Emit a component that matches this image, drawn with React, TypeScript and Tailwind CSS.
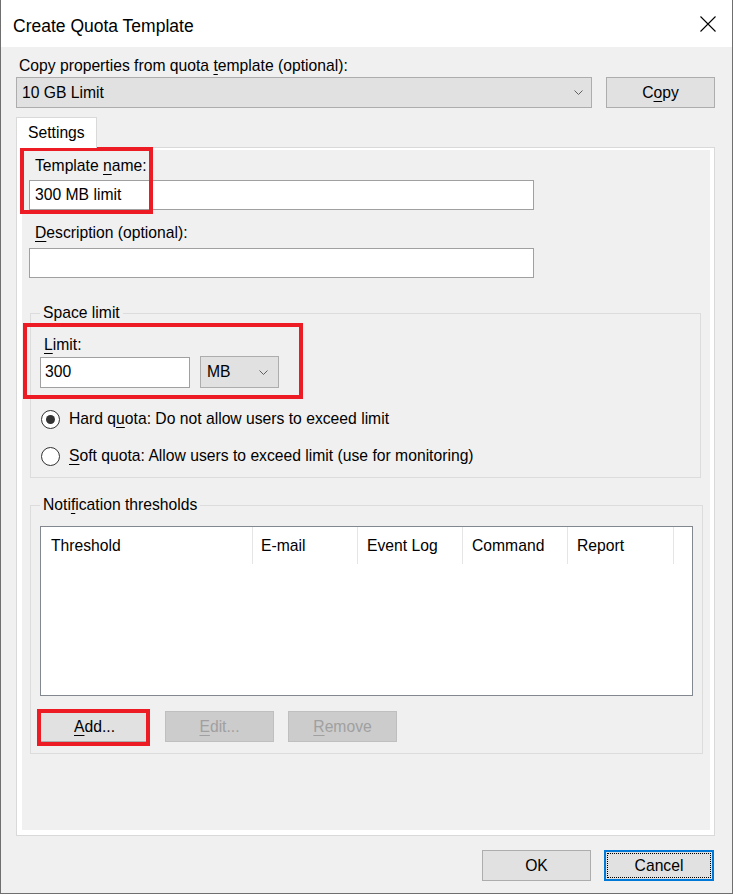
import React from 'react';

const U = ({ children }: { children: React.ReactNode }) => (
  <span className="underline decoration-1 underline-offset-[3px]">{children}</span>
);

const Chevron = () => (
  <svg width="9" height="5" viewBox="0 0 9 5" fill="none">
    <path d="M0.5 0.5L4.5 4.5L8.5 0.5" stroke="#606060" strokeWidth="1" />
  </svg>
);

interface WinButtonProps {
  children: React.ReactNode;
  disabled?: boolean;
  className?: string;
}

const WinButton: React.FC<WinButtonProps> = ({ children, disabled, className = '' }) => (
  <div
    className={`flex h-[31px] w-[109px] items-center justify-center border ${
      disabled ? 'border-[#bfbfbf] bg-[#cccccc] text-[#a0a0a0]' : 'border-[#adadad] bg-[#e1e1e1] text-black'
    } ${className}`}
  >
    {children}
  </div>
);

const Radio = ({ checked, children }: { checked?: boolean; children: React.ReactNode }) => (
  <div className="flex h-[24px] items-center">
    <div className="ml-[1px] flex h-[19px] w-[19px] items-center justify-center rounded-full border border-[#333333] bg-white">
      {checked && <div className="h-[9px] w-[9px] rounded-full bg-[#333333]" />}
    </div>
    <span className="ml-[9px]">{children}</span>
  </div>
);

const columns = [
  { label: 'Threshold', cls: 'w-[212px] pl-[10px]' },
  { label: 'E-mail', cls: 'w-[105px] pl-[8px]' },
  { label: 'Event Log', cls: 'w-[105px] pl-[9px]' },
  { label: 'Command', cls: 'w-[105px] pl-[9px]' },
  { label: 'Report', cls: 'w-[106px] pl-[9px]' },
];

export default function App() {
  return (
    <div className="relative flex h-[894px] w-[733px] flex-col border-x border-b border-[#6f6f6f] bg-[#f0f0f0] font-['Liberation_Sans',Arial,sans-serif] text-[15.7px] leading-[20px] text-black">
      {/* title bar */}
      <div className="flex h-[47px] shrink-0 justify-between bg-white">
        <div className="ml-[12px] mt-[14px] text-[17.5px] leading-[24px]">Create Quota Template</div>
        <svg className="mr-[16px] self-center" width="16" height="16" viewBox="0 0 16 16" fill="none">
          <path d="M0.5 0.5L15.5 15.5M15.5 0.5L0.5 15.5" stroke="#000" strokeWidth="1.1" />
        </svg>
      </div>

      <div className="ml-[18px] mt-[9px]">
        Copy properties from quota <U>t</U>emplate (optional):
      </div>
      <div className="ml-[15px] mt-[1px] flex items-center">
        <div className="flex h-[31px] w-[576px] items-center justify-between border border-[#adadad] bg-[#e1e1e1] pl-[5px] pr-[8px]">
          <span>10 GB Limit</span>
          <Chevron />
        </div>
        <WinButton className="ml-[14px] h-[30px] w-[107px]">
          C<U>o</U>py
        </WinButton>
      </div>

      {/* tab */}
      <div className="relative z-10 -mb-px ml-[15px] mt-[9px] h-[31px] w-[81px] border border-b-0 border-[#d9d9d9] bg-white pl-[11px] pt-[5px]">
        Settings
      </div>
      <div className="ml-[15px] h-[689px] w-[699px] border border-[#d9d9d9]">
        <div className="flex h-full flex-col border-b-[5px] border-l-[5px] border-r-[4px] border-t-2 border-white">
          <div className="ml-[13px] mt-[6px]">
            Template <U>n</U>ame:
          </div>
          <div className="ml-[7px] mt-[4px] flex h-[30px] w-[505px] items-center border border-[#a0a0a0] bg-white pl-[5px]">
            300 MB limit
          </div>
          <div className="ml-[13px] mt-[13px]">
            <U>D</U>escription (optional):
          </div>
          <div className="ml-[7px] mt-[5px] h-[30px] w-[505px] border border-[#a0a0a0] bg-white" />

          <fieldset className="ml-[8px] mt-[25px] w-[671px] border border-[#dcdcdc] px-[9px] pb-[9px]">
            <legend className="px-[3px]">Space limit</legend>
            <div className="ml-[4px] mt-[12px]">
              <U>L</U>imit:
            </div>
            <div className="mt-[1px] flex h-[32px] items-center">
              <div className="flex h-[31px] w-[150px] items-center border border-[#a0a0a0] bg-white pl-[4px]">300</div>
              <div className="ml-[10px] flex h-[32px] w-[79px] items-center justify-between border border-[#adadad] bg-[#e1e1e1] pl-[6px] pr-[10px]">
                <span>MB</span>
                <Chevron />
              </div>
            </div>
            <div className="mt-[19px]">
              <Radio checked>
                Hard q<U>u</U>ota: Do not allow users to exceed limit
              </Radio>
            </div>
            <div className="mt-[13px]">
              <Radio>
                <U>S</U>oft quota: Allow users to exceed limit (use for monitoring)
              </Radio>
            </div>
          </fieldset>

          <fieldset className="ml-[8px] mt-[17px] w-[672px] border border-[#dcdcdc] px-[9px] pb-[11px]">
            <legend className="px-[3px]">
              Noti<U>f</U>ication thresholds
            </legend>
            <div className="mt-[11px] h-[170px] w-[653px] border border-[#828790] bg-white">
              <div className="flex h-[37px]">
                {columns.map((c) => (
                  <div key={c.label} className={`flex h-full items-center border-r border-[#e5e5e5] ${c.cls}`}>
                    {c.label}
                  </div>
                ))}
              </div>
            </div>
            <div className="mt-[15px] flex">
              <WinButton>
                <span>
                  <U>A</U>dd...
                </span>
              </WinButton>
              <WinButton disabled className="ml-[16px]">
                <span>
                  <U>E</U>dit...
                </span>
              </WinButton>
              <WinButton disabled className="ml-[14px]">
                <span>
                  <U>R</U>emove
                </span>
              </WinButton>
            </div>
          </fieldset>
        </div>
      </div>

      <div className="mt-[14px] flex justify-end gap-[13px] pr-[18px]">
        <WinButton>OK</WinButton>
        <div className="h-[31px] w-[110px] border-2 border-[#0078d7] bg-[#e1e1e1] p-[1px]">
          <div className="flex h-full w-full items-center justify-center border border-dotted border-black">Cancel</div>
        </div>
      </div>

      {/* red annotation boxes */}
      <div className="pointer-events-none absolute left-[19px] top-[147px] h-[67px] w-[133px] border-4 border-[#ed1c24]" />
      <div className="pointer-events-none absolute left-[22px] top-[323px] h-[76px] w-[280px] border-4 border-[#ed1c24]" />
      <div className="pointer-events-none absolute left-[36px] top-[709px] h-[37px] w-[113px] border-4 border-[#ed1c24]" />
    </div>
  );
}
